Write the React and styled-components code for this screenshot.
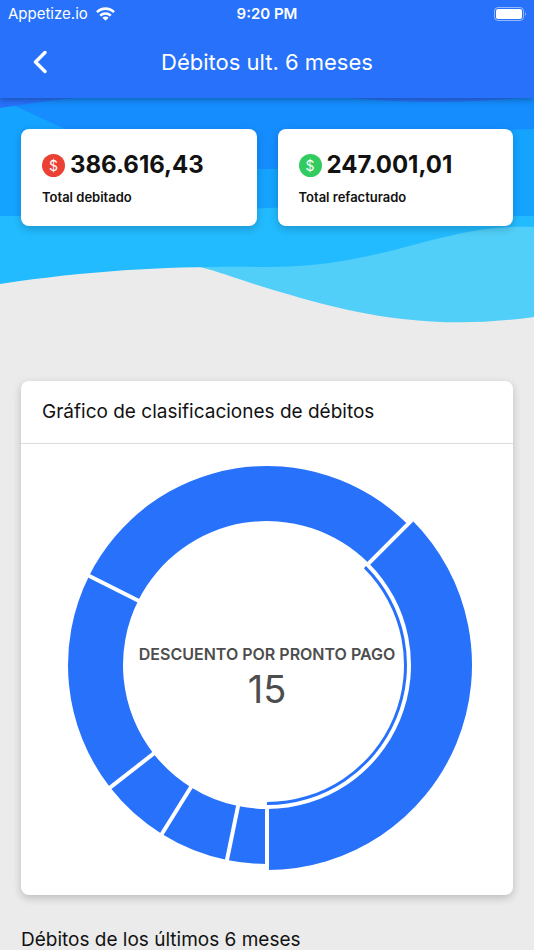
import React from "react";
import styled, { createGlobalStyle } from "styled-components";

const GlobalStyle = createGlobalStyle`
  *, *::before, *::after { box-sizing: border-box; }
  body {
    margin: 0;
    background: #ebebeb;
    color: #121212;
    font-family: Inter, "Liberation Sans", sans-serif;
  }
  h1, h2, p { margin: 0; }
`;

const Screen = styled.div`
  position: relative;
  min-height: 100vh;
`;

const TopBar = styled.header`
  position: relative;
  z-index: 2;
  background: #2771fb;
  color: #fff;
  box-shadow: 0 2px 6px rgba(0, 0, 0, 0.3);
`;

const StatusBar = styled.div`
  display: grid;
  grid-template-columns: 1fr auto 1fr;
  align-items: center;
  height: 27px;
  padding: 0 8px;
  font-size: 15px;
`;

const Carrier = styled.div`
  display: flex;
  align-items: center;
  gap: 8px;
`;

const Clock = styled.span`
  font-weight: 600;
`;

const Battery = styled.svg`
  justify-self: end;
`;

const Toolbar = styled.div`
  display: grid;
  grid-template-columns: 40px 1fr 40px;
  align-items: center;
  height: 71px;
  padding: 0 20px 2px;
`;

const BackButton = styled.button`
  display: flex;
  align-items: center;
  justify-content: center;
  height: 40px;
  padding: 0;
  border: 0;
  background: none;
  color: inherit;
  cursor: pointer;
`;

const Title = styled.h1`
  font-size: 22px;
  line-height: 28px;
  font-weight: 400;
  text-align: center;
`;

const Waves = styled.svg`
  position: absolute;
  top: 90px;
  left: 0;
  width: 100%;
  height: 240px;
`;

const Content = styled.main`
  position: relative;
  padding: 31px 21px 0;
`;

const Totals = styled.section`
  display: grid;
  grid-template-columns: 1fr 1fr;
  gap: 21px;
  margin-bottom: 155px;
`;

const Card = styled.div`
  background: #fff;
  border-radius: 8px;
  box-shadow: 0 3px 8px rgba(0, 0, 0, 0.2);
`;

const TotalCard = styled(Card)`
  height: 97px;
  padding: 20px 21px 0;
`;

const Amount = styled.p`
  display: flex;
  align-items: center;
  gap: 5px;
  font-size: 24px;
  line-height: 32px;
  font-weight: 700;
`;

const Coin = styled.span`
  display: flex;
  align-items: center;
  justify-content: center;
  width: 23px;
  height: 23px;
  border-radius: 50%;
  background: ${(p) => p.$color};
  color: #fff;
  font-size: 14px;
  line-height: 23px;
  font-weight: 400;
`;

const TotalLabel = styled.p`
  margin-top: 7px;
  font-size: 13px;
  line-height: 18px;
  font-weight: 600;
`;

const CardTitle = styled.h2`
  padding: 17px 21px;
  border-bottom: 1px solid #dcdcdc;
  font-size: 19px;
  line-height: 28px;
  font-weight: 400;
`;

const Donut = styled.svg`
  display: block;
  width: 100%;
  font-family: inherit;
`;

const SectionTitle = styled.h2`
  margin-top: 31px;
  font-size: 19px;
  line-height: 28px;
  font-weight: 400;
`;

const BLUE = "#2771fb";
const INNER = 144;
const OUTER = 199;
const SELECTED_OUTER = 205;

/* Angles in degrees, clockwise from the bottom of the ring. */
const SLICES = [
  { from: 0, to: 11.6 },
  { from: 11.6, to: 31.9 },
  { from: 31.9, to: 52 },
  { from: 52, to: 116.6 },
  { from: 116.6, to: 225 },
  { from: 225, to: 360, selected: true },
];

const at = (r, deg) => {
  const a = (deg * Math.PI) / 180;
  return `${-r * Math.sin(a)} ${r * Math.cos(a)}`;
};

const ringPath = (r1, r2, from, to) =>
  `M${at(r2, from)}A${r2} ${r2} 0 0 1 ${at(r2, to)}L${at(r1, to)}A${r1} ${r1} 0 0 0 ${at(r1, from)}Z`;

function DonutChart({ label, value }) {
  return (
    <Donut viewBox="-246 -221 492 451" role="img" aria-label={`${label}: ${value}`}>
      {SLICES.map((s) => (
        <path
          key={s.from}
          d={ringPath(INNER, s.selected ? SELECTED_OUTER : OUTER, s.from, s.to)}
          fill={BLUE}
        />
      ))}
      {SLICES.map((s) => (
        <path
          key={s.from}
          d={`M${at(INNER - 2, s.from)}L${at(SELECTED_OUTER + 2, s.from)}`}
          stroke="#fff"
          strokeWidth="4"
        />
      ))}
      <path d={ringPath(137, 140, 225, 360)} fill={BLUE} />
      <text y="-5" textAnchor="middle" fontSize="16" fontWeight="600" fill="#4d4d4d">
        {label}
      </text>
      <text y="38" textAnchor="middle" fontSize="38" fontWeight="400" fill="#4d4d4d">
        {value}
      </text>
    </Donut>
  );
}

function Total({ color, amount, label }) {
  return (
    <TotalCard>
      <Amount>
        <Coin $color={color}>$</Coin>
        {amount}
      </Amount>
      <TotalLabel>{label}</TotalLabel>
    </TotalCard>
  );
}

export default function App() {
  return (
    <Screen>
      <GlobalStyle />
      <TopBar>
        <StatusBar>
          <Carrier>
            Appetize.io
            <svg width="19" height="14" viewBox="0 0 18 13" fill="none" stroke="#fff" strokeWidth="2.4">
              <path d="M.9 4.700A11.6 11.6 0 0 1 17.1 4.700" />
              <path d="M4 8A7.2 7.2 0 0 1 14 8" />
              <path d="M9 13 6.1 10.1A4.1 4.1 0 0 1 11.900 10.1Z" fill="#fff" stroke="none" />
            </svg>
          </Carrier>
          <Clock>9:20 PM</Clock>
          <Battery width="32" height="14" viewBox="0 0 32 14">
            <rect x=".5" y=".5" width="29" height="13" rx="3.500" fill="none" stroke="#fff" strokeOpacity=".5" />
            <rect x="2" y="2" width="26" height="10" rx="2" fill="#fff" />
            <path d="M31 5Q33 7 31 9Z" fill="#fff" fillOpacity=".5" />
          </Battery>
        </StatusBar>
        <Toolbar>
          <BackButton type="button" aria-label="Volver">
            <svg width="14" height="24" viewBox="0 0 14 24" fill="none" stroke="currentColor" strokeWidth="3.400" strokeLinecap="round" strokeLinejoin="round">
              <path d="M12 2.500 2.500 12 12 21.500" />
            </svg>
          </BackButton>
          <Title>Débitos ult. 6 meses</Title>
        </Toolbar>
      </TopBar>

      <Waves viewBox="0 90 534 240" preserveAspectRatio="none" aria-hidden="true">
        <path fill="#51cff8" d="M0 90H534V317C420 333 340 310 267 288C240 280 220 272 200 267L0 260Z" />
        <path fill="#22bbff" d="M0 90H534V227C440 223 390 267 267 267C180 266 100 269 0 284Z" />
        <path fill="#14a3ff" d="M0 90H534V216H480C410 216 350 204 267 208C210 211 180 216 120 216H0Z" />
        <path fill="#158dff" d="M0 90H534V129C430 129 370 169 267 169C170 169 120 152 65 129L15 106L0 100Z" />
        <path fill="#2771fb" d="M0 90H534V96C480 104 400 103 350 98L300 94H110Q50 100 0 108Z" />
      </Waves>

      <Content>
        <Totals>
          <Total color="#eb4034" amount="386.616,43" label="Total debitado" />
          <Total color="#32cb60" amount="247.001,01" label="Total refacturado" />
        </Totals>
        <Card>
          <CardTitle>Gráfico de clasificaciones de débitos</CardTitle>
          <DonutChart label="DESCUENTO POR PRONTO PAGO" value="15" />
        </Card>
        <SectionTitle>Débitos de los últimos 6 meses</SectionTitle>
      </Content>
    </Screen>
  );
}
